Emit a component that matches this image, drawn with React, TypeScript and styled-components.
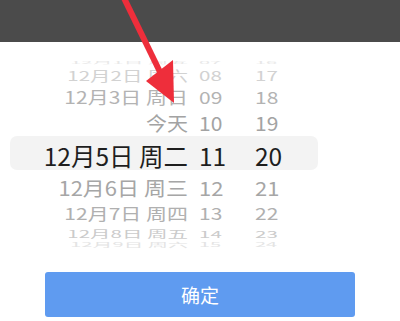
import React from "react";
import styled, { createGlobalStyle } from "styled-components";

const Global = createGlobalStyle`
  html, body { margin: 0; padding: 0; background: #ffffff; }
  body { font-family: "Noto Sans CJK SC", "Noto Sans", sans-serif; -webkit-font-smoothing: antialiased; }
`;

const Screen = styled.div`
  position: relative;
  width: 400px;
  height: 321px;
  overflow: hidden;
  background: #ffffff;
  display: flex;
  flex-direction: column;
`;

const TopBar = styled.div`
  height: 42px;
  background: #4b4b4b;
  flex-shrink: 0;
`;

const Wheel = styled.div`
  margin-top: 19px;
  height: 188px;
  overflow: hidden;
  display: flex;
  flex-direction: column;
  position: relative;
`;

const Band = styled.div`
  position: absolute;
  left: 10px;
  width: 308px;
  top: 75px;
  height: 34px;
  border-radius: 7px;
  background: #f3f3f3;
`;

const Row = styled.div<{ $h: number }>`
  position: relative;
  height: ${(p) => p.$h}px;
  flex-shrink: 0;
  display: flex;
  align-items: center;
`;

const Cells = styled.div<{ $size: number; $sy: number; $color: string }>`
  display: grid;
  grid-template-columns: 188px 67px 1fr;
  width: 100%;
  font-size: ${(p) => p.$size}px;
  line-height: ${(p) => Math.round(p.$size * 1.2)}px;
  color: ${(p) => p.$color};
  transform: scaleY(${(p) => p.$sy});
  transform-origin: center;
  white-space: nowrap;
  flex-shrink: 0;
`;

const DateCell = styled.span`
  text-align: right;
`;

const HourCell = styled.span`
  padding-left: 11px;
`;

const MinuteCell = styled.span``;

const Footer = styled.div`
  flex: 1;
  display: flex;
  align-items: flex-start;
  justify-content: center;
  padding-top: 23px;
`;

const ConfirmButton = styled.button`
  width: 310px;
  height: 45px;
  border: none;
  border-radius: 3px;
  background: #5f9bf0;
  color: #ffffff;
  font-family: "Noto Sans CJK SC", sans-serif;
  font-size: 19px;
  padding: 0;
`;

const ArrowLayer = styled.svg`
  position: absolute;
  left: 0;
  top: 0;
  pointer-events: none;
`;

type RowSpec = {
  date: string;
  hour: string;
  minute: string;
  h: number;
  size: number;
  sy: number;
  color: string;
};

const rows: RowSpec[] = [
  { date: "12月1日 周五", hour: "07", minute: "16", h: 4, size: 20, sy: 0.16, color: "#e8e8e8" },
  { date: "12月2日 周六", hour: "08", minute: "17", h: 20, size: 20.5, sy: 0.66, color: "#d2d2d2" },
  { date: "12月3日 周日", hour: "09", minute: "18", h: 24, size: 21, sy: 0.8, color: "#b3b3b3" },
  { date: "今天", hour: "10", minute: "19", h: 29, size: 21, sy: 0.93, color: "#a3a3a3" },
  { date: "12月5日 周二", hour: "11", minute: "20", h: 34, size: 24.5, sy: 1, color: "#1e1e1e" },
  { date: "12月6日 周三", hour: "12", minute: "21", h: 30, size: 22, sy: 0.9, color: "#a6a6a6" },
  { date: "12月7日 周四", hour: "13", minute: "22", h: 23, size: 21, sy: 0.78, color: "#b0b0b0" },
  { date: "12月8日 周五", hour: "14", minute: "23", h: 16, size: 20.5, sy: 0.48, color: "#cbcbcb" },
  { date: "12月9日 周六", hour: "15", minute: "24", h: 8, size: 20, sy: 0.3, color: "#e4e4e4" },
];

export default function App() {
  return (
    <>
      <Global />
      <Screen>
        <TopBar />
        <Wheel>
          <Band />
          {rows.map((r) => (
            <Row key={r.date} $h={r.h}>
              <Cells $size={r.size} $sy={r.sy} $color={r.color}>
                <DateCell>{r.date}</DateCell>
                <HourCell>{r.hour}</HourCell>
                <MinuteCell>{r.minute}</MinuteCell>
              </Cells>
            </Row>
          ))}
        </Wheel>
        <Footer>
          <ConfirmButton>确定</ConfirmButton>
        </Footer>
        <ArrowLayer width="400" height="321" viewBox="0 0 400 321">
          <line x1="123" y1="-4" x2="161" y2="74" stroke="#ee2e3b" strokeWidth="6" />
          <polygon points="146,81 173,60 174,103" fill="#ee2e3b" />
        </ArrowLayer>
      </Screen>
    </>
  );
}
